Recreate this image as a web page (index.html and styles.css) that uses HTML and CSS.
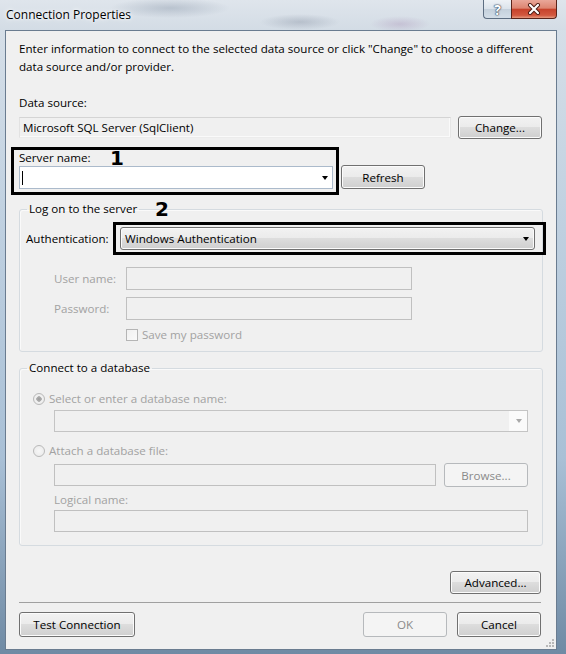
FILE: index.html
```html
<!DOCTYPE html>
<html lang="en">
<head>
  <meta charset="UTF-8">
  <meta name="viewport" content="width=device-width, initial-scale=1.0">
  <title>Connection Properties</title>
  <link rel="stylesheet" href="styles.css">
</head>
<body>
  <div class="window">
    <div class="titlebar">
      <span class="title">Connection Properties</span>
      <div class="caption-buttons">
        <span class="cap-btn help">?</span>
        <span class="cap-btn close">
          <svg width="14" height="12" viewBox="0 0 14 12">
            <path d="M3 2 L11 10 M11 2 L3 10" stroke="#4a1a12" stroke-width="4" stroke-linecap="round"/>
            <path d="M3 2 L11 10 M11 2 L3 10" stroke="#fff" stroke-width="2.2" stroke-linecap="round"/>
          </svg>
        </span>
      </div>
    </div>

    <div class="client">
      <p class="intro">Enter information to connect to the selected data source or click "Change" to choose a different<br>data source and/or provider.</p>

      <div class="label source-label">Data source:</div>
      <div class="source-row">
        <div class="textbox readonly source">Microsoft SQL Server (SqlClient)</div>
        <button class="btn change">Change...</button>
      </div>

      <div class="server-row">
        <div class="callout server-box">
          <span class="marker marker-1">1</span>
          <div class="label">Server name:</div>
          <div class="combo edit server"><span class="caret"></span><span class="arrow"></span></div>
        </div>
        <button class="btn refresh">Refresh</button>
      </div>

      <!-- login options -->
      <fieldset class="group logon">
        <legend>Log on to the server<span class="marker marker-2">2</span></legend>
        <div class="auth-row">
          <span class="label auth-label">Authentication:</span>
          <div class="callout auth-box">
            <div class="combo list">Windows Authentication<span class="arrow"></span></div>
          </div>
        </div>
        <div class="creds">
          <span class="label disabled">User name:</span>
          <div class="textbox disabled"></div>
          <span class="label disabled">Password:</span>
          <div class="textbox disabled"></div>
          <span></span>
          <div class="check disabled"><span class="checkbox"></span>Save my password</div>
        </div>
      </fieldset>

      <!-- database options -->
      <fieldset class="group database">
        <legend>Connect to a database</legend>
        <div class="radio-row disabled"><span class="radio checked"></span>Select or enter a database name:</div>
        <div class="combo edit off indent db-name"><span class="drop"><span class="arrow"></span></span></div>
        <div class="radio-row disabled second"><span class="radio"></span>Attach a database file:</div>
        <div class="file-row indent">
          <div class="textbox disabled file"></div>
          <button class="btn off browse">Browse...</button>
        </div>
        <div class="label disabled indent logical-label">Logical name:</div>
        <div class="textbox disabled indent logical"></div>
      </fieldset>

      <div class="advanced-row"><button class="btn advanced">Advanced...</button></div>
      <div class="separator"></div>
      <div class="footer">
        <button class="btn test">Test Connection</button>
        <button class="btn off ok">OK</button>
        <button class="btn cancel">Cancel</button>
      </div>

      <svg class="grip" width="10" height="10" viewBox="0 0 10 10">
        <g fill="#b8b8b8">
          <rect x="7" y="1" width="2" height="2"/>
          <rect x="4" y="4" width="2" height="2"/><rect x="7" y="4" width="2" height="2"/>
          <rect x="1" y="7" width="2" height="2"/><rect x="4" y="7" width="2" height="2"/><rect x="7" y="7" width="2" height="2"/>
        </g>
      </svg>
    </div>
  </div>
</body>
</html>
```

FILE: styles.css
```css
body {
    margin: 0;
    font-family: "Open Sans", "Noto Sans", sans-serif;
    font-size: 11.6px;
    color: #000;
    background: #d6dde4;
}

.window {
    width: 566px;
    height: 654px;
    display: flex;
    flex-direction: column;
    overflow: hidden;
    background: linear-gradient(to bottom, #d9e1e9 0, #bfd0e0 35%, #a9c0d6 70%, #6f8aa4 100%);
}

.titlebar {
    height: 30px;
    flex: none;
    display: flex;
    align-items: flex-start;
    background:
        radial-gradient(ellipse 60px 10px at 170px 8px, rgba(120, 135, 155, 0.35), transparent),
        radial-gradient(ellipse 40px 8px at 300px 22px, rgba(110, 120, 140, 0.3), transparent),
        radial-gradient(ellipse 30px 8px at 400px 24px, rgba(150, 110, 160, 0.25), transparent),
        linear-gradient(to bottom, #dfe5ec, #d3dce5);
}

.title {
    margin: 7px 0 0 6px;
    line-height: 16px;
    font-size: 12px;
    text-shadow: 0 0 6px #fff, 0 0 3px #fff;
}

.caption-buttons {
    margin-left: auto;
    margin-right: 9px;
    display: flex;
}

.cap-btn {
    height: 19px;
    box-sizing: border-box;
    display: flex;
    align-items: center;
    justify-content: center;
    border: 1px solid #5d6e82;
    border-top: none;
}

.help {
    width: 28px;
    border-right: none;
    border-bottom-left-radius: 4px;
    background: linear-gradient(to bottom, #eef2f6 0, #dbe3eb 50%, #c4d0dc 51%, #d3dee8 100%);
    color: #fff;
    font-weight: bold;
    font-size: 14px;
    text-shadow: 0 0 1px #34445a, 0 0 1px #34445a, 0 0 2px #34445a;
}

.close {
    width: 46px;
    border-color: #5a241a;
    border-bottom-right-radius: 4px;
    background: linear-gradient(to bottom, #e9a799 0, #dd8571 45%, #c7432c 52%, #d2583f 85%, #e69a80 100%);
}

.client {
    flex: 1;
    position: relative;
    display: flex;
    flex-direction: column;
    margin: 0 9px 4px 5px;
    padding: 9px 14px 0 13px;
    border: 1px solid #6a7c90;
    background: #f0f0f0;
}

.intro {
    margin: 0;
    line-height: 18px;
}

.label {
    line-height: 16px;
}

.disabled {
    color: #a2a2a2;
}

.source-label {
    margin-top: 19px;
}

.source-row {
    display: flex;
    align-items: center;
    margin-top: 5px;
}

.textbox {
    box-sizing: border-box;
    height: 22px;
    border: 1px solid #c0c0c0;
    background: #f0f0f0;
}

.textbox.readonly {
    height: 21px;
    width: 432px;
    padding-left: 3px;
    line-height: 19px;
    border-color: #d4d4d4 #e6e6e6 #ececec #e2e2e2;
    box-shadow: inset -1px -1px 0 #fafafa;
}

.btn {
    box-sizing: border-box;
    height: 23px;
    padding: 0;
    font: inherit;
    color: #000;
    border: 1px solid #707070;
    border-radius: 3px;
    background: linear-gradient(to bottom, #f2f2f2 0, #ebebeb 49%, #dddddd 50%, #cfcfcf 100%);
    box-shadow: inset 0 0 0 1px #fbfbfb;
}

.btn.off {
    color: #8a8a8a;
    border-color: #b6b9bc;
    background: #f4f4f4;
    box-shadow: none;
}

.change {
    width: 84px;
    margin-left: 7px;
}

.server-row {
    display: flex;
    align-items: flex-end;
    margin-top: 8px;
}

.callout {
    border: 3px solid #000;
}

.server-box {
    position: relative;
    width: 314px;
    margin-left: -8px;
    padding: 0 3px 3px 5px;
}

.marker {
    position: absolute;
    top: 0;
    font-family: "DejaVu Sans", sans-serif;
    font-weight: bold;
    font-size: 20px;
    line-height: 16px;
    color: #000;
}

.marker-1 {
    left: 96px;
}

.refresh {
    width: 84px;
    height: 24px;
    margin: 0 0 6px 2px;
}

.combo {
    box-sizing: border-box;
    display: flex;
    align-items: center;
    height: 23px;
}

.combo.edit {
    background: #fff;
    border: 1px solid #abbacb;
}

.caret {
    width: 1px;
    height: 14px;
    margin-left: 2px;
    background: #000;
}

.arrow {
    width: 0;
    height: 0;
    margin-left: auto;
    margin-right: 4px;
    border-left: 3.5px solid transparent;
    border-right: 3.5px solid transparent;
    border-top: 4px solid #000;
}

.group {
    margin: 6px -1px 0 0;
    padding: 0;
    min-width: 0;
    border: 1px solid #d5dbe0;
    border-radius: 3px;
    box-shadow: inset 1px 1px 0 #fafafa;
}

.group legend {
    position: relative;
    margin-left: 7px;
    padding: 0 2px;
    line-height: 16px;
}

.marker-2 {
    left: 128px;
}

.auth-row {
    display: flex;
    align-items: center;
    margin-top: 5px;
}

.auth-label {
    width: 93px;
    padding-left: 6px;
    box-sizing: border-box;
    flex: none;
}

.auth-box {
    width: 415px;
    margin-right: -4px;
    padding: 2px 8px 2px 4px;
    flex: none;
}

.combo.list {
    padding-left: 4px;
    border: 1px solid #707070;
    border-radius: 3px;
    background: linear-gradient(to bottom, #f2f2f2 0, #ebebeb 49%, #dddddd 50%, #cfcfcf 100%);
    box-shadow: inset 0 0 0 1px #fbfbfb;
}

.combo.list .arrow {
    margin-right: 5px;
}

.creds {
    display: grid;
    grid-template-columns: 72px 286px;
    row-gap: 7px;
    align-items: center;
    margin-top: 12px;
    padding: 0 0 8px 34px;
}

.creds .textbox {
    height: 23px;
}

.check {
    display: flex;
    align-items: center;
    line-height: 16px;
}

.checkbox {
    width: 12px;
    height: 12px;
    box-sizing: border-box;
    margin-right: 4px;
    border: 1px solid #b5b5b5;
    background: linear-gradient(to bottom right, #f0f0f0, #fafafa);
}

.database {
    margin-top: 8px;
    padding: 0 14px 13px 13px;
}

.database legend {
    margin-left: -6px;
}

.radio-row {
    display: flex;
    align-items: center;
    margin-top: 15px;
    line-height: 16px;
}

.radio-row.second {
    margin-top: 11px;
}

.radio {
    width: 12px;
    height: 12px;
    box-sizing: border-box;
    margin-right: 4px;
    border: 1px solid #b9b9b9;
    border-radius: 50%;
    background: radial-gradient(circle, #f7f7f7 0, #e8e8e8 100%);
}

.radio.checked {
    background: radial-gradient(circle, #9a9a9a 0, #b0b0b0 2.5px, #f2f2f2 3px, #e6e6e6 100%);
}

.indent {
    margin-left: 21px;
}

.combo.off {
    height: 22px;
    margin-top: 3px;
    border-color: #c4c4c4;
    background: #f0f0f0;
}

.drop {
    display: flex;
    align-items: center;
    width: 18px;
    height: 100%;
    margin-left: auto;
    background: #fafafa;
}

.drop .arrow {
    margin-right: 5px;
    border-top-color: #a8a8a8;
}

.file-row {
    display: flex;
    align-items: center;
    margin-top: 4px;
}

.textbox.file {
    width: 382px;
}

.browse {
    width: 84px;
    height: 24px;
    margin-left: 8px;
}

.logical-label {
    margin-top: 5px;
}

.textbox.logical {
    margin-top: 2px;
}

.advanced-row {
    display: flex;
    justify-content: flex-end;
    margin-top: 25px;
}

.advanced {
    width: 91px;
    margin-right: 1px;
}

.separator {
    height: 1px;
    margin: 8px 1px 0 0;
    background: #a0a0a0;
}

.footer {
    display: flex;
    margin-top: 9px;
    padding-right: 1px;
}

.footer .btn {
    height: 25px;
}

.test {
    width: 116px;
}

.ok {
    width: 84px;
    margin-left: auto;
}

.cancel {
    width: 84px;
    margin-left: 10px;
}

.grip {
    position: absolute;
    right: 1px;
    bottom: 1px;
}
```
